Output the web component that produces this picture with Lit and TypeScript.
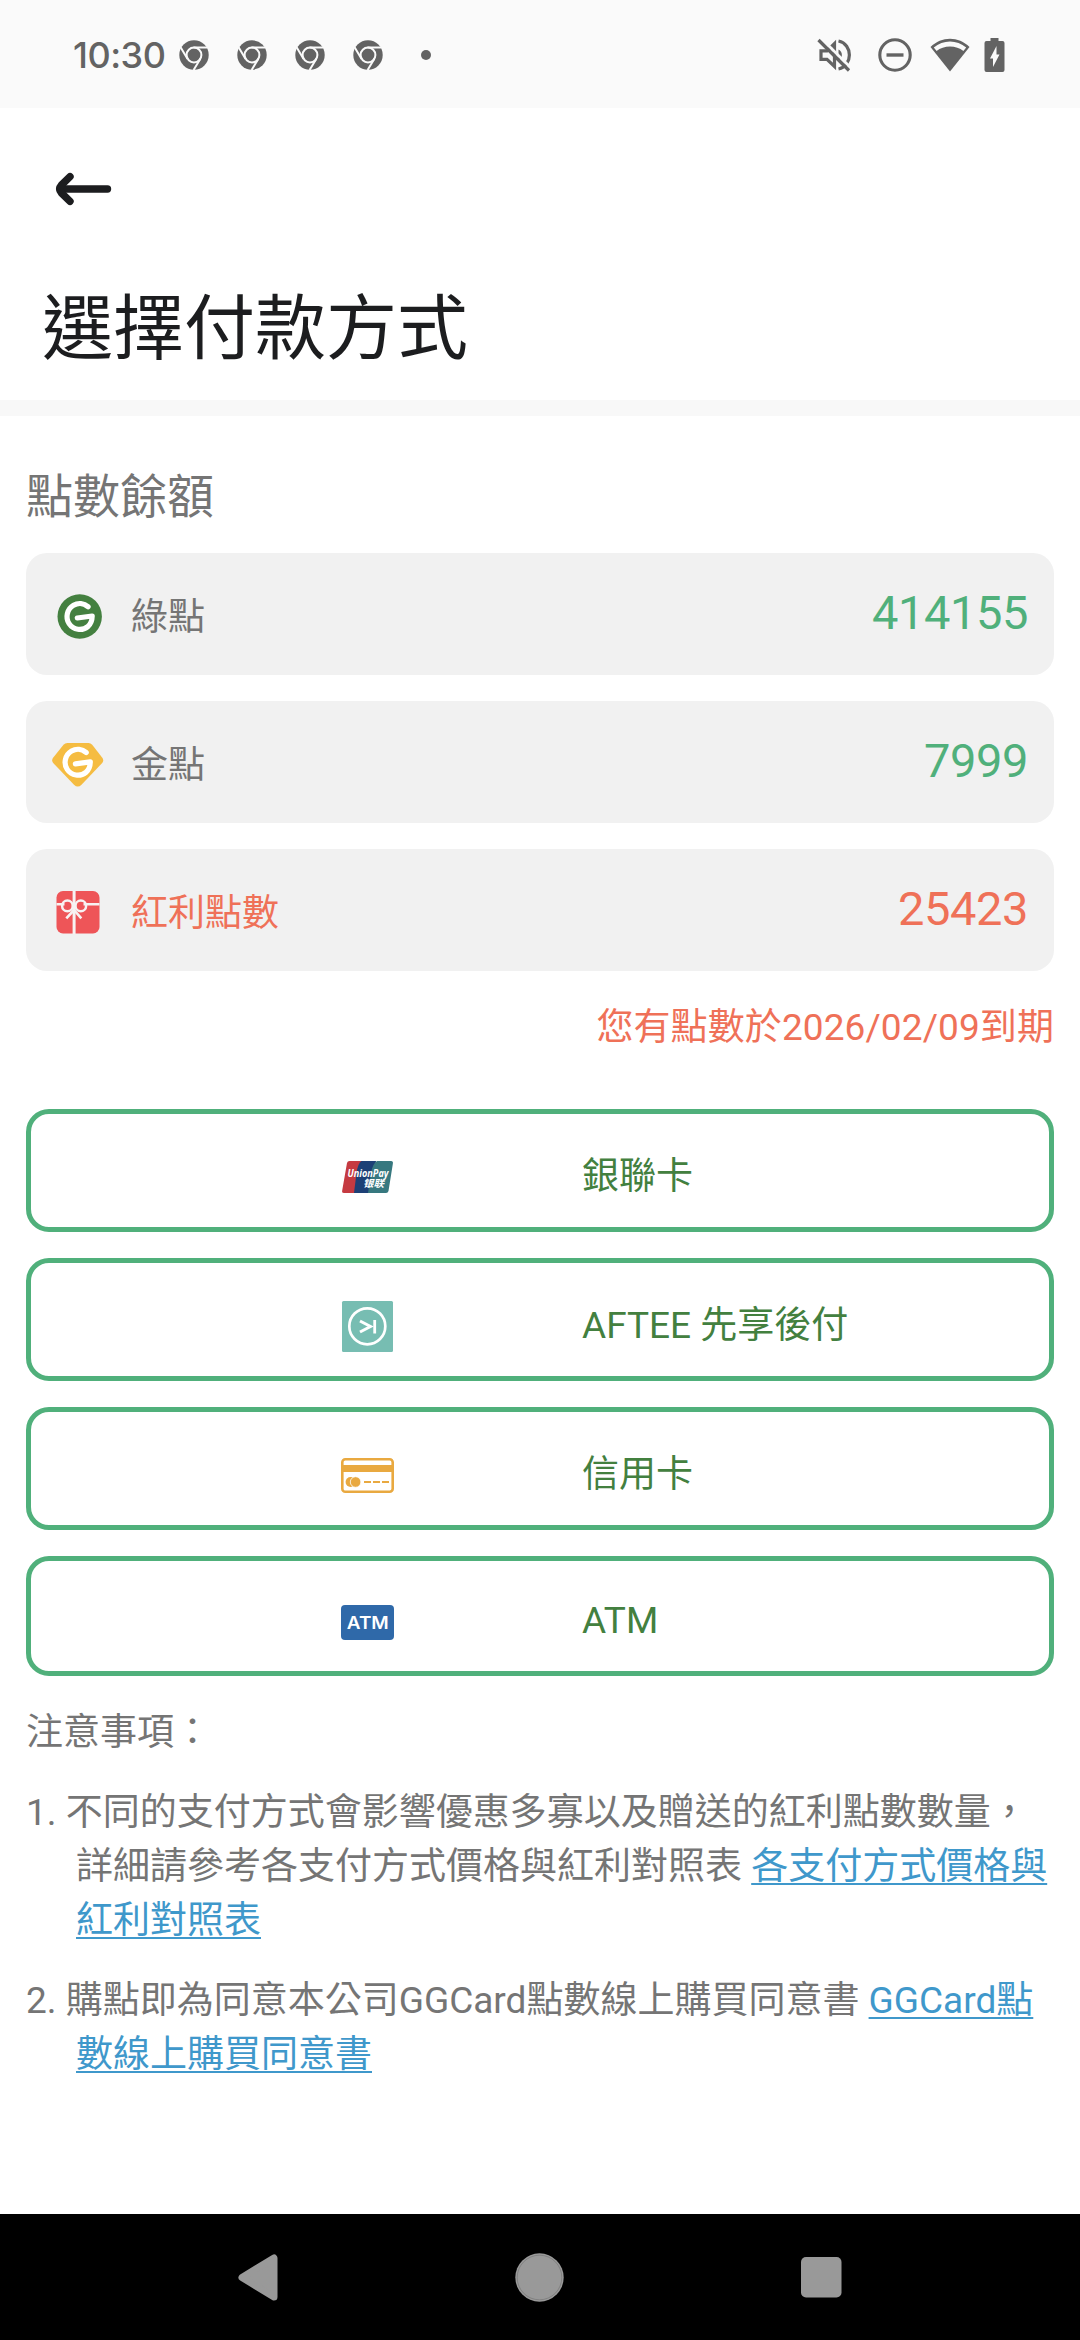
import { LitElement, html, css, svg } from "lit";
import { customElement, property } from "lit/decorators.js";

const chrome = html`<svg class="chrome" width="30" height="30" viewBox="0 0 30 30">
  <circle cx="15" cy="15" r="14.7" fill="#636363" />
  <circle cx="15" cy="15" r="7.4" fill="none" stroke="#fafafa" stroke-width="2" />
  <path d="M14.5 7.6H28.5M8.6 18.9L1.6 7.2M21.4 18.7L14.6 30" stroke="#fafafa" stroke-width="2" fill="none" />
</svg>`;

const mute = html`<svg class="mute" width="34" height="34" viewBox="0 0 34 34" fill="none" stroke="#636363" stroke-width="3.2">
  <path d="M4 12.8H10L17.5 5.500V28.500L10 21.4H4Z" />
  <path d="M21.5 3C36 6 36 28 21.5 31" />
  <path d="M21.5 11.5C26 13.5 26 20.5 21.5 22.5Z" fill="#636363" stroke="none" />
  <path d="M3.8 0L34 30" stroke="#fafafa" stroke-width="3" />
  <path d="M1.5 2L32 32.5" />
</svg>`;

const dnd = html`<svg class="dnd" width="34" height="34" viewBox="0 0 34 34" fill="none" stroke="#636363">
  <circle cx="17" cy="17" r="15.2" stroke-width="3.1" />
  <path d="M8.5 17H25.5" stroke-width="3.4" />
</svg>`;

const wifi = html`<svg class="wifi" width="40" height="34" viewBox="0 0 40 34" fill="#636363">
  <path d="M0.5 9C11.5-2 28.5-2 39.5 9L20 33.5Z" />
  <path d="M3.8 9.6C13 1.6 27 1.6 36.2 9.6L33.4 13C26.500 7 13.500 7 6.600 13Z" fill="#fafafa" />
</svg>`;

const battery = html`<svg width="21" height="34" viewBox="0 0 21 34">
  <path d="M6.500 0H14.500V3H18.500Q20.500 3 20.500 5V32Q20.500 34 18.500 34H2.500Q.5 34 .5 32V5Q.5 3 2.500 3H6.500Z" fill="#636363" />
  <path d="M12.500 8V16.500H15.500L9 29V20.500H6Z" fill="#fafafa" />
</svg>`;

const letterMark = svg`<path d="M30.600 12.700C26.500 9 20.500 8.600 16 11.200C9.500 15 7.600 23.500 11.600 29.600C15.800 36 24.500 37.200 30.300 32.600C33.600 29.900 34.600 26.500 34.700 22L19.800 24" fill="none" stroke="#fff" stroke-width="5.200" stroke-linecap="round" stroke-linejoin="round" />`;

const greenIcon = html`<svg width="52" height="46" viewBox="-5.500 0 52 46">
  <circle cx="22.200" cy="22.500" r="22.200" fill="#448040" />${letterMark}
</svg>`;

const goldIcon = html`<svg width="52" height="46" viewBox="0 -1 52 46">
  <path d="M15.500 0H36.500Q38.700 0 40.200 1.700L50.300 14.800Q52.200 17.500 50.200 20L29.500 41.700Q25.800 45.400 22 41.700L1.200 20Q-.8 17.500 1.100 14.800L11.500 1.700Q13 0 15.500 0Z" fill="#f5bc41" />
  <g transform="translate(3.600 -3.200)">${letterMark}</g>
</svg>`;

const giftIcon = html`<svg width="52" height="46" viewBox="-4.500 -1 52 46">
  <rect width="43" height="42.500" rx="6.500" fill="#ee5558" />
  <g fill="none" stroke="#f7f2f2">
    <path d="M17.600 0V43" stroke-width="3" />
    <path d="M0 13.200H8M27 13.200H43" stroke-width="2.400" />
    <ellipse cx="10.900" cy="14.900" rx="5.300" ry="5.300" stroke-width="2.500" />
    <ellipse cx="24.300" cy="14.900" rx="5.300" ry="5.300" stroke-width="2.500" />
    <path d="M17.600 19L9.800 27.300M17.600 19L24.800 27.300" stroke-width="2.600" />
  </g>
</svg>`;

const unionPay = html`<svg width="53" height="52" viewBox="-1 -9 53 52">
  <path d="M7.500 0H22L16 32H2Q-.4 32 .2 29.500L5 2Q5.500 0 7.500 0Z" fill="#c53a41" />
  <path d="M19.500 0H34L29 32H12L14.500 12Q16 2 19.500 0Z" fill="#1d4076" />
  <path d="M35 0H49Q51.400 0 50.900 2.500L46.500 30Q46 32 44 32H26L29 12Q31 2 35 0Z" fill="#37787f" />
  <text class="up" x="5.500" y="15.600" textLength="41" lengthAdjust="spacingAndGlyphs">UnionPay</text>
  <text class="up cn" x="21" y="25.500" textLength="21" lengthAdjust="spacingAndGlyphs">银联</text>
</svg>`;

const aftee = html`<svg width="53" height="52" viewBox="-1 0 53 52" fill="none" stroke="#fff">
  <rect width="51" height="51" rx="1.500" fill="#77bdb2" stroke="none" />
  <circle cx="25.300" cy="25.300" r="18" stroke-width="2.700" />
  <path d="M18 20L28.500 25.500L18 31" stroke-width="3" />
  <path d="M32.700 19V32.500" stroke-width="2.800" />
</svg>`;

const creditCard = html`<svg width="53" height="52" viewBox="0 -8 53 52">
  <rect x="1.300" y="1.300" width="50.400" height="32.400" rx="3" fill="none" stroke="#e9a940" stroke-width="2.600" />
  <path d="M1 7H52V14H1Z" fill="#e9a940" />
  <circle cx="9.600" cy="24" r="5" fill="#e9a940" />
  <circle cx="14.600" cy="24" r="5.300" fill="#e9a940" stroke="#fff" stroke-width=".8" />
  <path d="M23 24H30M32 24H39M41 24H48" stroke="#e9a940" stroke-width="2.200" />
</svg>`;

const atm = html`<svg width="53" height="52" viewBox="0 -8 53 52">
  <rect width="53" height="35" rx="4" fill="#2f69a9" />
  <text class="atm" x="5.800" y="23.800" textLength="42" lengthAdjust="spacingAndGlyphs">ATM</text>
</svg>`;

@customElement("status-bar")
export class StatusBar extends LitElement {
  static styles = css`
    :host { display: flex; align-items: center; justify-content: space-between; height: 108px; padding: 0 75px 0 73px; box-sizing: border-box; background: #fafafa; }
    .side { display: flex; align-items: center; padding-top: 2px; }
    .time { width: 106px; font: 500 36px/44px Inter, Roboto, sans-serif; color: #636363; letter-spacing: -0.5px; }
    .chrome { margin-right: 28px; }
    .dot { width: 10px; height: 10px; margin-left: 10px; border-radius: 50%; background: #636363; }
    .mute { margin-right: 27px; }
    .dnd { margin-right: 18px; }
    .wifi { margin-right: 14px; }
  `;
  render() {
    return html`<div class="side"><span class="time">10:30</span>${[1, 2, 3, 4].map(() => chrome)}<i class="dot"></i></div>
      <div class="side">${mute}${dnd}${wifi}${battery}</div>`;
  }
}

@customElement("balance-row")
export class BalanceRow extends LitElement {
  @property() label = "";
  @property() value = "";
  @property({ attribute: false }) icon: unknown;
  static styles = css`
    :host { display: flex; align-items: center; height: 122px; padding: 0 26px; box-sizing: border-box; border-radius: 21px; background: #f1f1f1; color: #757575; }
    .icon { display: flex; padding-top: 5px; }
    .label { flex: 1; margin-left: 27px; padding-top: 8px; font-size: 37px; line-height: 54px; }
    .value { font-size: 47px; line-height: 56px; padding-bottom: 3px; letter-spacing: -0.4px; color: #50b07b; }
    :host(.bonus), :host(.bonus) .value { color: #ef7158; }
  `;
  render() {
    return html`<span class="icon">${this.icon}</span><span class="label">${this.label}</span><span class="value">${this.value}</span>`;
  }
}

@customElement("pay-option")
export class PayOption extends LitElement {
  @property() label = "";
  @property({ attribute: false }) icon: unknown;
  static styles = css`
    :host { display: grid; grid-template-columns: 368px 1fr; column-gap: 183px; align-items: center; height: 123px; box-sizing: border-box; border: 5px solid #50b07b; border-radius: 23px; color: #43803f; font-size: 37px; line-height: 54px; }
    :host(.short) { height: 120px; }
    .icon { display: flex; justify-content: flex-end; margin-right: 5px; padding-top: 14px; }
    .label { padding-top: 12px; }
    :host(.short) .label { padding-top: 10px; }
    .up { font: italic 700 10px "Noto Sans", sans-serif; fill: #fff; }
    .cn { font: italic 700 10px "Noto Sans CJK SC", sans-serif; }
    .atm { font: 600 17px Inter, sans-serif; fill: #fff; }
  `;
  render() {
    return html`<span class="icon">${this.icon}</span><span class="label">${this.label}</span>`;
  }
}

@customElement("app-root")
export class AppRoot extends LitElement {
  static styles = css`
    :host { display: flex; flex-direction: column; height: 2340px; background: #fff; color: #757575; font-family: Roboto, "Noto Sans CJK TC", sans-serif; }
    .head { height: 292px; box-sizing: border-box; padding: 64px 42px 0; }
    .back { display: block; margin-left: 13px; }
    .title { margin: 71px 0 0; font-size: 71px; line-height: 104px; font-weight: 400; color: #1c1d1f; }
    .rule { height: 16px; background: #f8f8f8; }
    .main { flex: 1; padding: 0 26px; }
    .heading { margin: 46px 0 21px; font-size: 47px; line-height: 70px; font-weight: 400; }
    .stack { display: flex; flex-direction: column; gap: 26px; }
    .expiry { margin: 30px 0 54px; text-align: right; font-size: 37px; line-height: 54px; letter-spacing: 0.1px; color: #ef7158; }
    .notes { font-size: 37px; line-height: 54px; }
    .notes p { margin: 0; }
    .notes .lead { margin-top: 30px; }
    .notes .item { margin-top: 26px; padding-left: 50px; text-indent: -50px; }
    .link { color: #3f98cb; text-decoration: underline; text-decoration-thickness: 2px; text-underline-offset: 4px; text-decoration-skip-ink: none; }
    .nav { display: flex; align-items: center; justify-content: space-between; height: 126px; padding: 0 238px; background: #000; }
  `;
  render() {
    return html`
      <status-bar></status-bar>
      <header class="head">
        <svg class="back" width="58" height="34" viewBox="0 0 58 34" fill="none" stroke="#1c1d1f" stroke-width="7.400" stroke-linecap="round" stroke-linejoin="round">
          <path d="M52.500 17H5" /><path d="M15 4.700L6.500 13Q3 17 6.500 21L15 29.300" />
        </svg>
        <h1 class="title">選擇付款方式</h1>
      </header>
      <div class="rule"></div>
      <main class="main">
        <h2 class="heading">點數餘額</h2>
        <section class="stack">
          <balance-row label="綠點" value="414155" .icon=${greenIcon}></balance-row>
          <balance-row label="金點" value="7999" .icon=${goldIcon}></balance-row>
          <balance-row class="bonus" label="紅利點數" value="25423" .icon=${giftIcon}></balance-row>
        </section>
        <p class="expiry">您有點數於2026/02/09到期</p>
        <section class="stack">
          <pay-option label="銀聯卡" .icon=${unionPay}></pay-option>
          <pay-option label="AFTEE 先享後付" .icon=${aftee}></pay-option>
          <pay-option label="信用卡" .icon=${creditCard}></pay-option>
          <pay-option class="short" label="ATM" .icon=${atm}></pay-option>
        </section>
        <section class="notes">
          <p class="lead">注意事項：</p>
          <p class="item">1. 不同的支付方式會影響優惠多寡以及贈送的紅利點數數量，詳細請參考各支付方式價格與紅利對照表 <a class="link">各支付方式價格與紅利對照表</a></p>
          <p class="item">2. 購點即為同意本公司GGCard點數線上購買同意書 <a class="link">GGCard點數線上購買同意書</a></p>
        </section>
      </main>
      <nav class="nav">
        <svg width="40" height="48" viewBox="0 0 40 48"><path d="M4 24.500L36 5V44Z" fill="#999" stroke="#999" stroke-width="7" stroke-linejoin="round" /></svg>
        <svg width="49" height="49" viewBox="0 0 49 49"><circle cx="24.500" cy="24.500" r="24.200" fill="#999" /><circle cx="24.500" cy="24.500" r="22.300" fill="none" stroke="#777" stroke-width=".7" /></svg>
        <svg width="41" height="41" viewBox="0 0 41 41"><rect width="40.500" height="40.500" rx="5" fill="#999" /></svg>
      </nav>`;
  }
}
